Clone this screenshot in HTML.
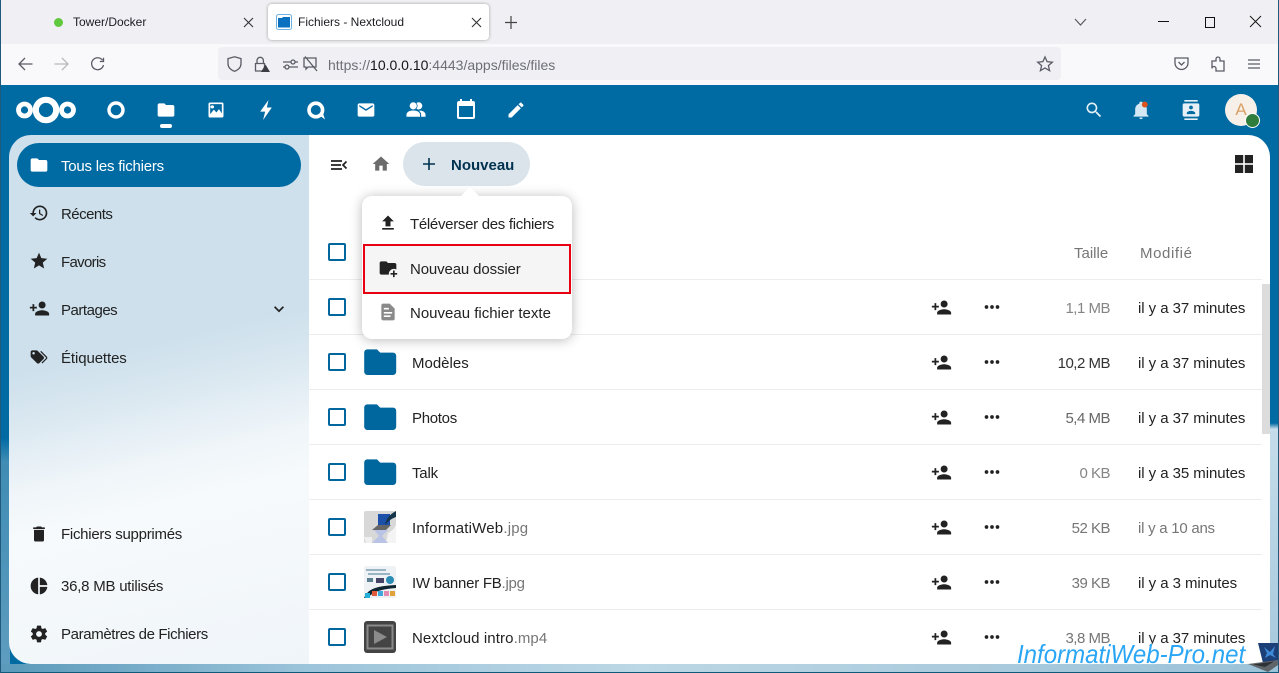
<!DOCTYPE html>
<html lang="fr"><head><meta charset="utf-8"><title>Fichiers - Nextcloud</title>
<style>
html,body{margin:0;padding:0;width:1279px;height:673px;overflow:hidden;background:#006aa3}
body{position:relative;font-family:"Liberation Sans",sans-serif;font-size:15px;color:#222}
div,svg{position:absolute;display:block}
svg{overflow:visible}
.t{line-height:20px;white-space:nowrap}
.t span{color:#767676}
.line{left:309px;width:953px;height:1px;background:#ededed}
.cb{left:328px;width:14px;height:14px;border:2px solid #00679e;border-radius:2px;background:#fff}
.sz{right:169px;color:#767676;letter-spacing:-.5px}
.dt{left:1138px;letter-spacing:-.06px}
.nm{left:412px}
.st{left:61px}
.tb{fill:none;stroke:#5b5b66;stroke-width:1.3}
</style></head><body>
<svg width="0" height="0" style="left:0;top:0"><defs>
<path id="f" d="M10,4H4C2.89,4 2,4.89 2,6V18A2,2 0 0,0 4,20H20A2,2 0 0,0 22,18V8C22,6.89 21.1,6 20,6H12L10,4Z"/>
<path id="s" d="M15,14C12.33,14 7,15.33 7,18V20H23V18C23,15.33 17.67,14 15,14M6,10V7H4V10H1V12H4V15H6V12H9V10M15,12A4,4 0 0,0 19,8A4,4 0 0,0 15,4A4,4 0 0,0 11,8A4,4 0 0,0 15,12Z"/>
<path id="d" d="M16,12A2,2 0 0,1 18,10A2,2 0 0,1 20,12A2,2 0 0,1 18,14A2,2 0 0,1 16,12M10,12A2,2 0 0,1 12,10A2,2 0 0,1 14,12A2,2 0 0,1 12,14A2,2 0 0,1 10,12M4,12A2,2 0 0,1 6,10A2,2 0 0,1 8,12A2,2 0 0,1 6,14A2,2 0 0,1 4,12Z"/>
</defs></svg>

<!-- page background edges -->
<div style="left:0;top:85px;width:10px;height:588px;background:linear-gradient(180deg,#006aa3 0,#006aa3 60%,#3f8cb4 64%,#5f9dbf 100%)"></div>
<div style="left:1270px;top:85px;width:9px;height:588px;background:linear-gradient(180deg,#006aa3 0,#006aa3 57.5%,#c5dcea 58.5%,#b4d2e3 80%,#a5c8dc 100%)"></div>
<div style="left:0;top:664px;width:1279px;height:9px;background:linear-gradient(90deg,#5a99ba 0,#9cc4da 24%,#bcd7e5 50%,#a9cadc 78%,#9bc2d8 100%)"></div>
<div style="left:0;top:672px;width:1279px;height:1px;background:#0f5a7a"></div>
<div style="left:0;top:0;width:1px;height:673px;background:#1f5a7c"></div>
<div style="left:1278px;top:0;width:1px;height:673px;background:#1f5a7c"></div>

<!-- tab strip -->
<div style="left:1px;top:0;width:1277px;height:44px;background:#f0f0f4"></div>
<div style="left:1px;top:44px;width:1277px;height:41px;background:#f9f9fb"></div>
<div style="left:54px;top:18px;width:9px;height:9px;border-radius:50%;background:#5fc83c"></div>
<div class="t" style="left:73px;top:12px;font-size:12px;color:#1c1b22">Tower/Docker</div>
<svg style="left:244px;top:18px" width="9" height="9" viewBox="0 0 9 9"><path d="M0,0L9,9M9,0L0,9" stroke="#333" stroke-width="1.1"/></svg>
<div style="left:268px;top:4px;width:221px;height:36px;background:#fff;border-radius:4px;box-shadow:0 0 3px rgba(0,0,0,.35)"></div>
<svg style="left:276px;top:14px" width="16" height="16" viewBox="0 0 16 16"><rect x=".5" y=".5" width="15" height="15" rx="2" fill="#fff" stroke="#6db1e4"/><path d="M2,4H6L7,3H14V13.5H2Z" fill="#0a70c0"/></svg>
<div class="t" style="left:298px;top:12px;font-size:12px;color:#1c1b22">Fichiers - Nextcloud</div>
<svg style="left:472px;top:18px" width="9" height="9" viewBox="0 0 9 9"><path d="M0,0L9,9M9,0L0,9" stroke="#333" stroke-width="1.1"/></svg>
<svg style="left:505px;top:16px" width="12" height="13" viewBox="0 0 12 13"><path d="M6,0V13M0,6.5H12" stroke="#444" stroke-width="1.2"/></svg>
<svg style="left:1074px;top:18px" width="13" height="8" viewBox="0 0 13 8"><path d="M1,1L6.5,7L12,1" fill="none" stroke="#555" stroke-width="1.1"/></svg>
<div style="left:1158px;top:21px;width:11px;height:1px;background:#111"></div>
<div style="left:1205px;top:17px;width:8px;height:9px;border:1px solid #111"></div>
<svg style="left:1250px;top:16px" width="11" height="11" viewBox="0 0 11 11"><path d="M0,0L11,11M11,0L0,11" stroke="#111" stroke-width=".9"/></svg>

<!-- toolbar -->
<svg style="left:18px;top:57px" width="15" height="14" viewBox="0 0 15 14"><path d="M14.5,7H1M7,1L1,7L7,13" class="tb"/></svg>
<svg style="left:54px;top:57px" width="15" height="14" viewBox="0 0 15 14"><path d="M.5,7H14M8,1L14,7L8,13" fill="none" stroke="#b8b8bd" stroke-width="1.3"/></svg>
<svg style="left:90px;top:57px" width="15" height="15" viewBox="0 0 15 15"><path d="M12.5,3.2A6,6 0 1,0 13.5,8M13.5,.8V4.5H9.8" class="tb"/></svg>
<div style="left:218px;top:47px;width:843px;height:33px;background:#f0f0f4;border-radius:4px"></div>
<svg style="left:227px;top:56px" width="15" height="16" viewBox="0 0 15 16"><path d="M7.5,.8L14,2.6V7.5C14,11.5 11,14 7.5,15.3C4,14 1,11.5 1,7.5V2.6Z" class="tb"/></svg>
<svg style="left:254px;top:56px" width="16" height="16" viewBox="0 0 16 16"><path d="M3,7.5V4.5A3.2,3.2 0 0,1 9.4,4.5V7.5M1.5,7.5H10.5V15H1.5Z" class="tb"/><path d="M11.5,8.5L16,16H7Z" fill="#3c3c44"/></svg>
<svg style="left:283px;top:58px" width="15" height="13" viewBox="0 0 15 13"><path d="M0,4H8M12,4H15M0,9H2M6,9H15" class="tb"/><circle cx="10" cy="4" r="2" class="tb"/><circle cx="4" cy="9" r="2" class="tb"/></svg>
<svg style="left:303px;top:56px" width="15" height="16" viewBox="0 0 15 16"><path d="M1,2H13V11H5L3,13V11H1ZM2,.5L14,15" class="tb"/></svg>
<div class="t" style="left:328px;top:55px;font-size:14px;color:#6e6e78">https://<b style="font-weight:400;color:#15141a">10.0.0.10</b>:4443/apps/files/files</div>
<svg style="left:1037px;top:56px" width="16" height="16" viewBox="0 0 16 16"><path d="M8,1L10.1,5.7L15.3,6.2L11.4,9.6L12.6,14.7L8,12L3.4,14.7L4.6,9.6L.7,6.2L5.9,5.7Z" class="tb"/></svg>
<svg style="left:1174px;top:57px" width="15" height="14" viewBox="0 0 15 14"><path d="M1,1H14V6A6.5,6.5 0 0,1 1,6ZM4.5,5L7.5,8L10.5,5" class="tb"/></svg>
<svg style="left:1211px;top:56px" width="15" height="16" viewBox="0 0 15 16"><path d="M1,5H5V3A2,2 0 0,1 9,3V5H13V15H5V12.5A1.7,1.7 0 0,0 1,12.5Z" class="tb"/></svg>
<svg style="left:1248px;top:59px" width="12" height="10" viewBox="0 0 12 10"><path d="M0,1H12M0,5H12M0,9H12" class="tb"/></svg>

<!-- top nav -->
<svg style="left:16px;top:96px" width="60" height="28" viewBox="0 0 60 28"><circle cx="8.5" cy="14" r="6" fill="none" stroke="#fff" stroke-width="4.8"/><circle cx="30" cy="14" r="10.2" fill="none" stroke="#fff" stroke-width="6.2"/><circle cx="51.5" cy="14" r="6" fill="none" stroke="#fff" stroke-width="4.8"/></svg>
<svg style="left:106px;top:100px" width="20" height="20" viewBox="0 0 20 20"><circle cx="10" cy="10" r="7" fill="none" stroke="#fff" stroke-width="3.4"/></svg>
<svg style="left:156px;top:100px" width="20" height="20" viewBox="0 0 24 24" fill="#fff"><use href="#f"/></svg>
<div style="left:160px;top:124px;width:12px;height:4px;border-radius:2px;background:#fff"></div>
<svg style="left:206px;top:100px" width="20" height="20" viewBox="0 0 24 24" fill="#fff"><path d="M5,3H19A2,2 0 0,1 21,5V19A2,2 0 0,1 19,21H5A2,2 0 0,1 3,19V5A2,2 0 0,1 5,3ZM5,5V17L9.5,11.5L12.5,15L15.5,11L19,16V5ZM7.5,6.5A1.8,1.8 0 1,1 7.5,10A1.8,1.8 0 1,1 7.5,6.5Z" fill-rule="evenodd"/></svg>
<svg style="left:256px;top:100px" width="20" height="20" viewBox="0 0 24 24" fill="#fff"><path d="M15,0L5,14H11L8.5,24L19,9H13Z"/></svg>
<svg style="left:306px;top:100px" width="20" height="20" viewBox="0 0 20 20"><circle cx="9.8" cy="10" r="6.8" fill="none" stroke="#fff" stroke-width="3.6"/><path d="M13,15L19,19.5L16.5,12Z" fill="#fff"/></svg>
<svg style="left:356px;top:100px" width="20" height="20" viewBox="0 0 24 24" fill="#fff"><path d="M20,8L12,13L4,8V6L12,11L20,6M20,4H4C2.89,4 2,4.89 2,6V18A2,2 0 0,0 4,20H20A2,2 0 0,0 22,18V6C22,4.89 21.1,4 20,4Z"/></svg>
<svg style="left:405px;top:99px" width="22" height="22" viewBox="0 0 24 24" fill="#fff" stroke="#fff" stroke-width=".8"><path d="M16,17V19H2V17S2,13 9,13 16,17 16,17M12.5,7.5A3.5,3.5 0 1,0 9,11A3.5,3.5 0 0,0 12.5,7.5M15.94,13A5.32,5.32 0 0,1 18,17V19H22V17S22,13.37 15.94,13M15,4A3.39,3.39 0 0,0 13.07,4.59A5,5 0 0,1 13.07,10.41A3.39,3.39 0 0,0 15,11A3.5,3.5 0 0,0 15,4Z"/></svg>
<svg style="left:454px;top:98px" width="24" height="24" viewBox="0 0 24 24" fill="#fff"><path d="M19,3H18V1H16V3H8V1H6V3H5C3.89,3 3,3.9 3,5V19A2,2 0 0,0 5,21H19A2,2 0 0,0 21,19V5A2,2 0 0,0 19,3M19,19H5V8H19V19Z"/></svg>
<svg style="left:506px;top:100px" width="20" height="20" viewBox="0 0 24 24" fill="#fff"><path d="M20.71,7.04C21.1,6.65 21.1,6 20.71,5.63L18.37,3.29C18,2.9 17.35,2.9 16.96,3.29L15.12,5.12L18.87,8.87M3,17.25V21H6.75L17.81,9.93L14.06,6.18L3,17.25Z"/></svg>
<svg style="left:1084px;top:100px" width="20" height="20" viewBox="0 0 24 24" fill="#e6f0f6"><path d="M9.5,3A6.5,6.5 0 0,1 16,9.5C16,11.11 15.41,12.59 14.44,13.73L14.71,14H15.5L20.5,19L19,20.5L14,15.5V14.71L13.73,14.44C12.59,15.41 11.11,16 9.5,16A6.5,6.5 0 0,1 3,9.5A6.5,6.5 0 0,1 9.5,3M9.5,5C7,5 5,7 5,9.5C5,12 7,14 9.5,14C12,14 14,12 14,9.5C14,7 12,5 9.5,5Z"/></svg>
<svg style="left:1131px;top:100px" width="20" height="20" viewBox="0 0 24 24" fill="#d5e8f3"><path d="M21,19V20H3V19L5,17V11C5,7.9 7.03,5.17 10,4.29C10,4.19 10,4.1 10,4A2,2 0 0,1 12,2A2,2 0 0,1 14,4C14,4.1 14,4.19 14,4.29C16.97,5.17 19,7.9 19,11V17L21,19M14,21A2,2 0 0,1 12,23A2,2 0 0,1 10,21"/><circle cx="16.5" cy="5.5" r="3.5" fill="#e0531c"/></svg>
<svg style="left:1181px;top:100px" width="20" height="20" viewBox="0 0 24 24" fill="#e6f0f6"><path d="M20,0H4V2H20V0M4,24H20V22H4V24M20,4H4A2,2 0 0,0 2,6V18A2,2 0 0,0 4,20H20A2,2 0 0,0 22,18V6A2,2 0 0,0 20,4M12,6.75A2.25,2.25 0 0,1 14.25,9A2.25,2.25 0 0,1 12,11.25A2.25,2.25 0 0,1 9.75,9A2.25,2.25 0 0,1 12,6.75M17,17H7V15.5C7,13.83 10.33,13 12,13C13.67,13 17,13.83 17,15.5V17Z"/></svg>
<div style="left:1225px;top:94px;width:32px;height:32px;border-radius:50%;background:#f6f0e9"></div>
<div class="t" style="left:1225px;top:100px;width:32px;text-align:center;font-size:17px;color:#d9a066">A</div>
<div style="left:1245px;top:113px;width:13px;height:13px;border-radius:50%;background:#2f7d3c;border:1.5px solid #fff"></div>

<!-- sidebar -->
<div style="left:9px;top:135px;width:300px;height:529px;border-radius:22px 0 0 22px;background:linear-gradient(167deg,#cde0ec 0,#cde0ec 40%,#d9e7f0 48%,#eff5f9 60%,#f6fafc 68%,#f0f5f9 100%)"></div>
<div style="left:17px;top:143px;width:284px;height:44px;border-radius:22px;background:#006aa3"></div>
<svg style="left:29px;top:155px" width="20" height="20" viewBox="0 0 24 24" fill="#fff"><use href="#f"/></svg>
<div class="t st" style="top:157px;color:#fff;letter-spacing:-.22px">Tous les fichiers</div>
<svg style="left:29px;top:203px" width="20" height="20" viewBox="0 0 24 24" fill="#222"><path d="M13.5,8H12V13L16.28,15.54L17,14.33L13.5,12.25V8M13,3A9,9 0 0,0 4,12H1L4.96,16.03L9,12H6A7,7 0 0,1 13,5A7,7 0 0,1 20,12A7,7 0 0,1 13,19C11.07,19 9.32,18.21 8.06,16.94L6.64,18.36C8.27,20 10.5,21 13,21A9,9 0 0,0 22,12A9,9 0 0,0 13,3"/></svg>
<div class="t st" style="top:205px;letter-spacing:-.53px">Récents</div>
<svg style="left:29px;top:251px" width="20" height="20" viewBox="0 0 24 24" fill="#222"><path d="M12,17.27L18.18,21L16.54,13.97L22,9.24L14.81,8.62L12,2L9.19,8.62L2,9.24L7.45,13.97L5.82,21L12,17.27Z"/></svg>
<div class="t st" style="top:253px;letter-spacing:-.67px">Favoris</div>
<svg style="left:29px;top:298px" width="21" height="21" viewBox="0 0 24 24" fill="#222"><use href="#s"/></svg>
<div class="t st" style="top:301px;letter-spacing:-.48px">Partages</div>
<svg style="left:269px;top:299px" width="20" height="20" viewBox="0 0 24 24" fill="#222"><path d="M7.41,8.58L12,13.17L16.59,8.58L18,10L12,16L6,10L7.41,8.58Z"/></svg>
<svg style="left:29px;top:347px" width="20" height="20" viewBox="0 0 24 24" fill="#222"><path d="M5.5,9A1.5,1.5 0 0,0 7,7.5A1.5,1.5 0 0,0 5.5,6A1.5,1.5 0 0,0 4,7.5A1.5,1.5 0 0,0 5.5,9M17.41,11.58C17.77,11.94 18,12.44 18,13C18,13.55 17.78,14.05 17.41,14.41L12.41,19.41C12.05,19.77 11.55,20 11,20C10.45,20 9.95,19.78 9.58,19.41L2.59,12.42C2.22,12.05 2,11.55 2,11V6C2,4.89 2.89,4 4,4H9C9.55,4 10.05,4.22 10.41,4.58L17.41,11.58M13.54,5.71L14.54,4.71L21.41,11.58C21.78,11.94 22,12.45 22,13C22,13.55 21.78,14.05 21.42,14.41L16.04,19.79L15.04,18.79L20.75,13L13.54,5.71Z"/></svg>
<div class="t st" style="top:349px;letter-spacing:-.1px">Étiquettes</div>
<svg style="left:29px;top:524px" width="20" height="20" viewBox="0 0 24 24" fill="#222"><path d="M19,4H15.5L14.5,3H9.5L8.5,4H5V6H19M6,19A2,2 0 0,0 8,21H16A2,2 0 0,0 18,19V7H6V19Z"/></svg>
<div class="t st" style="top:525px;letter-spacing:-.27px">Fichiers supprimés</div>
<svg style="left:29px;top:576px" width="20" height="20" viewBox="0 0 24 24" fill="#222"><path d="M11,2V22C5.9,21.5 2,17.2 2,12C2,6.8 5.9,2.5 11,2M13,2V11H22C21.5,6.2 17.8,2.5 13,2M13,13V22C17.7,21.5 21.5,17.8 22,13H13Z"/></svg>
<div class="t st" style="top:577px;letter-spacing:-.23px">36,8 MB utilisés</div>
<svg style="left:29px;top:624px" width="20" height="20" viewBox="0 0 24 24" fill="#222"><path d="M12,15.5A3.5,3.5 0 0,1 8.5,12A3.5,3.5 0 0,1 12,8.5A3.5,3.5 0 0,1 15.5,12A3.5,3.5 0 0,1 12,15.5M19.43,12.97C19.47,12.65 19.5,12.33 19.5,12C19.5,11.67 19.47,11.34 19.43,11L21.54,9.37C21.73,9.22 21.78,8.95 21.66,8.73L19.66,5.27C19.54,5.05 19.27,4.96 19.05,5.05L16.56,6.05C16.04,5.66 15.5,5.32 14.87,5.07L14.5,2.42C14.46,2.18 14.25,2 14,2H10C9.75,2 9.54,2.18 9.5,2.42L9.13,5.07C8.5,5.32 7.96,5.66 7.44,6.05L4.95,5.05C4.73,4.96 4.46,5.05 4.34,5.27L2.34,8.73C2.21,8.95 2.27,9.22 2.46,9.37L4.57,11C4.53,11.34 4.5,11.67 4.5,12C4.5,12.33 4.53,12.65 4.57,12.97L2.46,14.63C2.27,14.78 2.21,15.05 2.34,15.27L4.34,18.73C4.46,18.95 4.73,19.03 4.95,18.95L7.44,17.94C7.96,18.34 8.5,18.68 9.13,18.93L9.5,21.58C9.54,21.82 9.75,22 10,22H14C14.25,22 14.46,21.82 14.5,21.58L14.87,18.93C15.5,18.67 16.04,18.34 16.56,17.94L19.05,18.95C19.27,19.03 19.54,18.95 19.66,18.73L21.66,15.27C21.78,15.05 21.73,14.78 21.54,14.63L19.43,12.97Z"/></svg>
<div class="t st" style="top:625px;letter-spacing:-.37px">Paramètres de Fichiers</div>

<!-- main -->
<div style="left:309px;top:135px;width:961px;height:529px;background:#fff;border-radius:0 22px 0 0"></div>
<svg style="left:331px;top:160px" width="16" height="10" viewBox="0 0 16 10"><path d="M0,1H11M0,5H10M0,9H11M15.5,1.5L12,5L15.5,8.5" fill="none" stroke="#222" stroke-width="1.7"/></svg>
<svg style="left:371px;top:154px" width="20" height="20" viewBox="0 0 24 24" fill="#6b6b6b"><path d="M10,20V14H14V20H19V12H22L12,3L2,12H5V20H10Z"/></svg>
<div style="left:403px;top:142px;width:127px;height:44px;border-radius:22px;background:#dbe4ea"></div>
<svg style="left:423px;top:158px" width="12" height="12" viewBox="0 0 12 12"><path d="M6,0V12M0,6H12" stroke="#00324f" stroke-width="1.6"/></svg>
<div class="t" style="left:451px;top:156px;font-weight:700;color:#00324f">Nouveau</div>
<svg style="left:1235px;top:155px" width="18" height="18" viewBox="0 0 18 18" fill="#222"><rect width="8.2" height="8.2"/><rect x="9.8" width="8.2" height="8.2"/><rect y="9.8" width="8.2" height="8.2"/><rect x="9.8" y="9.8" width="8.2" height="8.2"/></svg>

<!-- header row -->
<div class="cb" style="top:243px"></div>
<div class="t" style="left:1074px;top:244px;color:#767676">Taille</div>
<div class="t" style="left:1140px;top:244px;color:#767676;letter-spacing:.6px">Modifié</div>
<div class="line" style="top:279px"></div>
<div class="line" style="top:334px"></div>
<div class="line" style="top:389px"></div>
<div class="line" style="top:444px"></div>
<div class="line" style="top:499px"></div>
<div class="line" style="top:554px"></div>
<div class="line" style="top:609px"></div>
<div style="left:1262px;top:284px;width:8px;height:150px;background:#dcdcdc"></div>

<!-- row 1 -->
<div class="cb" style="top:298px"></div>
<svg style="left:931px;top:297px" width="21" height="21" viewBox="0 0 24 24" fill="#222"><use href="#s"/></svg>
<svg style="left:981px;top:296px" width="22" height="22" viewBox="0 0 24 24" fill="#222"><use href="#d"/></svg>
<div class="t sz" style="top:299px;color:#858585">1,1 MB</div>
<div class="t dt" style="top:299px">il y a 37 minutes</div>
<!-- row 2 -->
<div class="cb" style="top:353px"></div>
<svg style="left:360.8px;top:342.8px" width="38.4" height="38.4" viewBox="0 0 24 24" fill="#00679e"><use href="#f"/></svg>
<div class="t nm" style="top:354px">Modèles</div>
<svg style="left:931px;top:352px" width="21" height="21" viewBox="0 0 24 24" fill="#222"><use href="#s"/></svg>
<svg style="left:981px;top:351px" width="22" height="22" viewBox="0 0 24 24" fill="#222"><use href="#d"/></svg>
<div class="t sz" style="top:354px;color:#333">10,2 MB</div>
<div class="t dt" style="top:354px">il y a 37 minutes</div>
<!-- row 3 -->
<div class="cb" style="top:408px"></div>
<svg style="left:360.8px;top:397.8px" width="38.4" height="38.4" viewBox="0 0 24 24" fill="#00679e"><use href="#f"/></svg>
<div class="t nm" style="top:409px;letter-spacing:-.3px">Photos</div>
<svg style="left:931px;top:407px" width="21" height="21" viewBox="0 0 24 24" fill="#222"><use href="#s"/></svg>
<svg style="left:981px;top:406px" width="22" height="22" viewBox="0 0 24 24" fill="#222"><use href="#d"/></svg>
<div class="t sz" style="top:409px;color:#666">5,4 MB</div>
<div class="t dt" style="top:409px">il y a 37 minutes</div>
<!-- row 4 -->
<div class="cb" style="top:463px"></div>
<svg style="left:360.8px;top:452.8px" width="38.4" height="38.4" viewBox="0 0 24 24" fill="#00679e"><use href="#f"/></svg>
<div class="t nm" style="top:464px;letter-spacing:-.2px">Talk</div>
<svg style="left:931px;top:462px" width="21" height="21" viewBox="0 0 24 24" fill="#222"><use href="#s"/></svg>
<svg style="left:981px;top:461px" width="22" height="22" viewBox="0 0 24 24" fill="#222"><use href="#d"/></svg>
<div class="t sz" style="top:464px;color:#858585">0 KB</div>
<div class="t dt" style="top:464px">il y a 35 minutes</div>
<!-- row 5 -->
<div class="cb" style="top:518px"></div>
<svg style="left:364px;top:511px" width="32" height="32" viewBox="0 0 32 32"><rect width="32" height="32" rx="2" fill="#d8d8d8"/><path d="M24,22C28,20 30,18 32,14V32H22Z" fill="#f4f4f4"/><path d="M0,26H8V32H2Z" fill="#f0f0f0"/><rect x="14" y="3" width="12" height="11" fill="#1c4fa8"/><path d="M8,19L14,14H27L22,19Z" fill="#666"/><path d="M10,19H24L18,25L24,32H8L15,25Z" fill="#b9c3e6"/><path d="M32,0C26,3 22,8 21,14C25,9 29,7 32,6Z" fill="#14344a"/></svg>
<div class="t nm" style="top:519px;letter-spacing:.2px">InformatiWeb<span>.jpg</span></div>
<svg style="left:931px;top:517px" width="21" height="21" viewBox="0 0 24 24" fill="#222"><use href="#s"/></svg>
<svg style="left:981px;top:516px" width="22" height="22" viewBox="0 0 24 24" fill="#222"><use href="#d"/></svg>
<div class="t sz" style="top:519px">52 KB</div>
<div class="t dt" style="top:519px;color:#767676;letter-spacing:-.25px">il y a 10 ans</div>
<!-- row 6 -->
<div class="cb" style="top:573px"></div>
<svg style="left:364px;top:566px" width="32" height="32" viewBox="0 0 32 32"><rect width="32" height="32" rx="2" fill="#eef2f4"/><path d="M2,4H22M4,8H26" stroke="#7f9fb5" stroke-width="1.5"/><rect x="3" y="12" width="6" height="4" fill="#5d7f92"/><rect x="12" y="12" width="8" height="5" fill="#446"/><circle cx="26" cy="14" r="4" fill="#2b8cb4"/><path d="M0,32C4,22 14,20 32,19V22C18,23 8,26 4,32Z" fill="#0f2530"/><rect x="8" y="25" width="5" height="5" fill="#e35a3a"/><rect x="14" y="25" width="5" height="5" fill="#3fa7dc"/><rect x="20" y="25" width="5" height="5" fill="#e58ab0"/><rect x="26" y="25" width="5" height="5" fill="#e0a33a"/><rect x="1" y="27" width="5" height="5" fill="#23b0d8"/></svg>
<div class="t nm" style="top:574px;letter-spacing:-.25px">IW banner FB<span>.jpg</span></div>
<svg style="left:931px;top:572px" width="21" height="21" viewBox="0 0 24 24" fill="#222"><use href="#s"/></svg>
<svg style="left:981px;top:571px" width="22" height="22" viewBox="0 0 24 24" fill="#222"><use href="#d"/></svg>
<div class="t sz" style="top:574px">39 KB</div>
<div class="t dt" style="top:574px">il y a 3 minutes</div>
<!-- row 7 -->
<div class="cb" style="top:628px"></div>
<svg style="left:364px;top:621px" width="32" height="32" viewBox="0 0 32 32"><rect width="32" height="32" rx="3" fill="#444"/><rect x="3.5" y="4.5" width="25" height="23" fill="none" stroke="#8a8a8a" stroke-width="2"/><path d="M10,9L23,16L10,23Z" fill="#8a8a8a"/></svg>
<div class="t nm" style="top:629px;letter-spacing:.1px">Nextcloud intro<span>.mp4</span></div>
<svg style="left:931px;top:627px" width="21" height="21" viewBox="0 0 24 24" fill="#222"><use href="#s"/></svg>
<svg style="left:981px;top:626px" width="22" height="22" viewBox="0 0 24 24" fill="#222"><use href="#d"/></svg>
<div class="t sz" style="top:629px">3,8 MB</div>
<div class="t dt" style="top:629px">il y a 37 minutes</div>

<!-- new menu -->
<div style="left:362px;top:196px;width:210px;height:143px;background:#fff;border-radius:10px;box-shadow:0 1px 12px rgba(0,0,0,.28)"></div>
<svg style="left:460px;top:187px" width="20" height="10" viewBox="0 0 20 10"><path d="M0,10L10,0L20,10Z" fill="#fff"/></svg>
<svg style="left:378px;top:213px" width="20" height="20" viewBox="0 0 24 24" fill="#222"><path d="M9,16V10H5L12,3L19,10H15V16H9M5,20V18H19V20H5Z"/></svg>
<div class="t" style="left:410px;top:215px;letter-spacing:-.3px">Téléverser des fichiers</div>
<div style="left:363px;top:244px;width:204px;height:46px;background:#f5f5f5;border:2px solid #e60012"></div>
<svg style="left:378px;top:258px" width="20" height="20" viewBox="0 0 24 24" fill="#222"><path d="M13,19C13,19.34 13.04,19.67 13.09,20H4C2.9,20 2,19.11 2,18V6C2,4.89 2.89,4 4,4H10L12,6H20C21.1,6 22,6.89 22,8V13.81C21.12,13.3 20.1,13 19,13C15.69,13 13,15.69 13,19M20,18V15H18V18H15V20H18V23H20V20H23V18H20Z"/></svg>
<div class="t" style="left:410px;top:260px;letter-spacing:-.13px">Nouveau dossier</div>
<svg style="left:378px;top:302px" width="20" height="20" viewBox="0 0 24 24" fill="#8a8a8a"><path d="M6,2H14L20,8V20A2,2 0 0,1 18,22H6C4.89,22 4,21.1 4,20V4C4,2.89 4.89,2 6,2M15,18V16H7V18H15M17,14V12H7V14H17M13,9V7H7V9H13Z"/></svg>
<div class="t" style="left:410px;top:304px">Nouveau fichier texte</div>

<!-- watermark -->
<div style="left:1017px;top:639px;line-height:30px;white-space:nowrap;font-size:26px;font-style:italic;color:#2ba6f5;text-shadow:0 0 2px #fff,0 0 2px #fff;transform:scaleX(.925);transform-origin:0 0">InformatiWeb-Pro.net</div>
<svg style="left:1248px;top:643px" width="30" height="30" viewBox="0 0 30 30"><path d="M10,0H30V17L15,20Z" fill="#1c3f78"/><path d="M16,4L22,9L27,3L25,11L28,15L22,12L17,15L19,10Z" fill="#3f8ad8"/><path d="M0,21L15,19L30,17V22L20,29Z" fill="#5f6569"/><path d="M5,21.5L15,20L26,18.5L17,24Z" fill="#2f3235"/></svg>
</body></html>
